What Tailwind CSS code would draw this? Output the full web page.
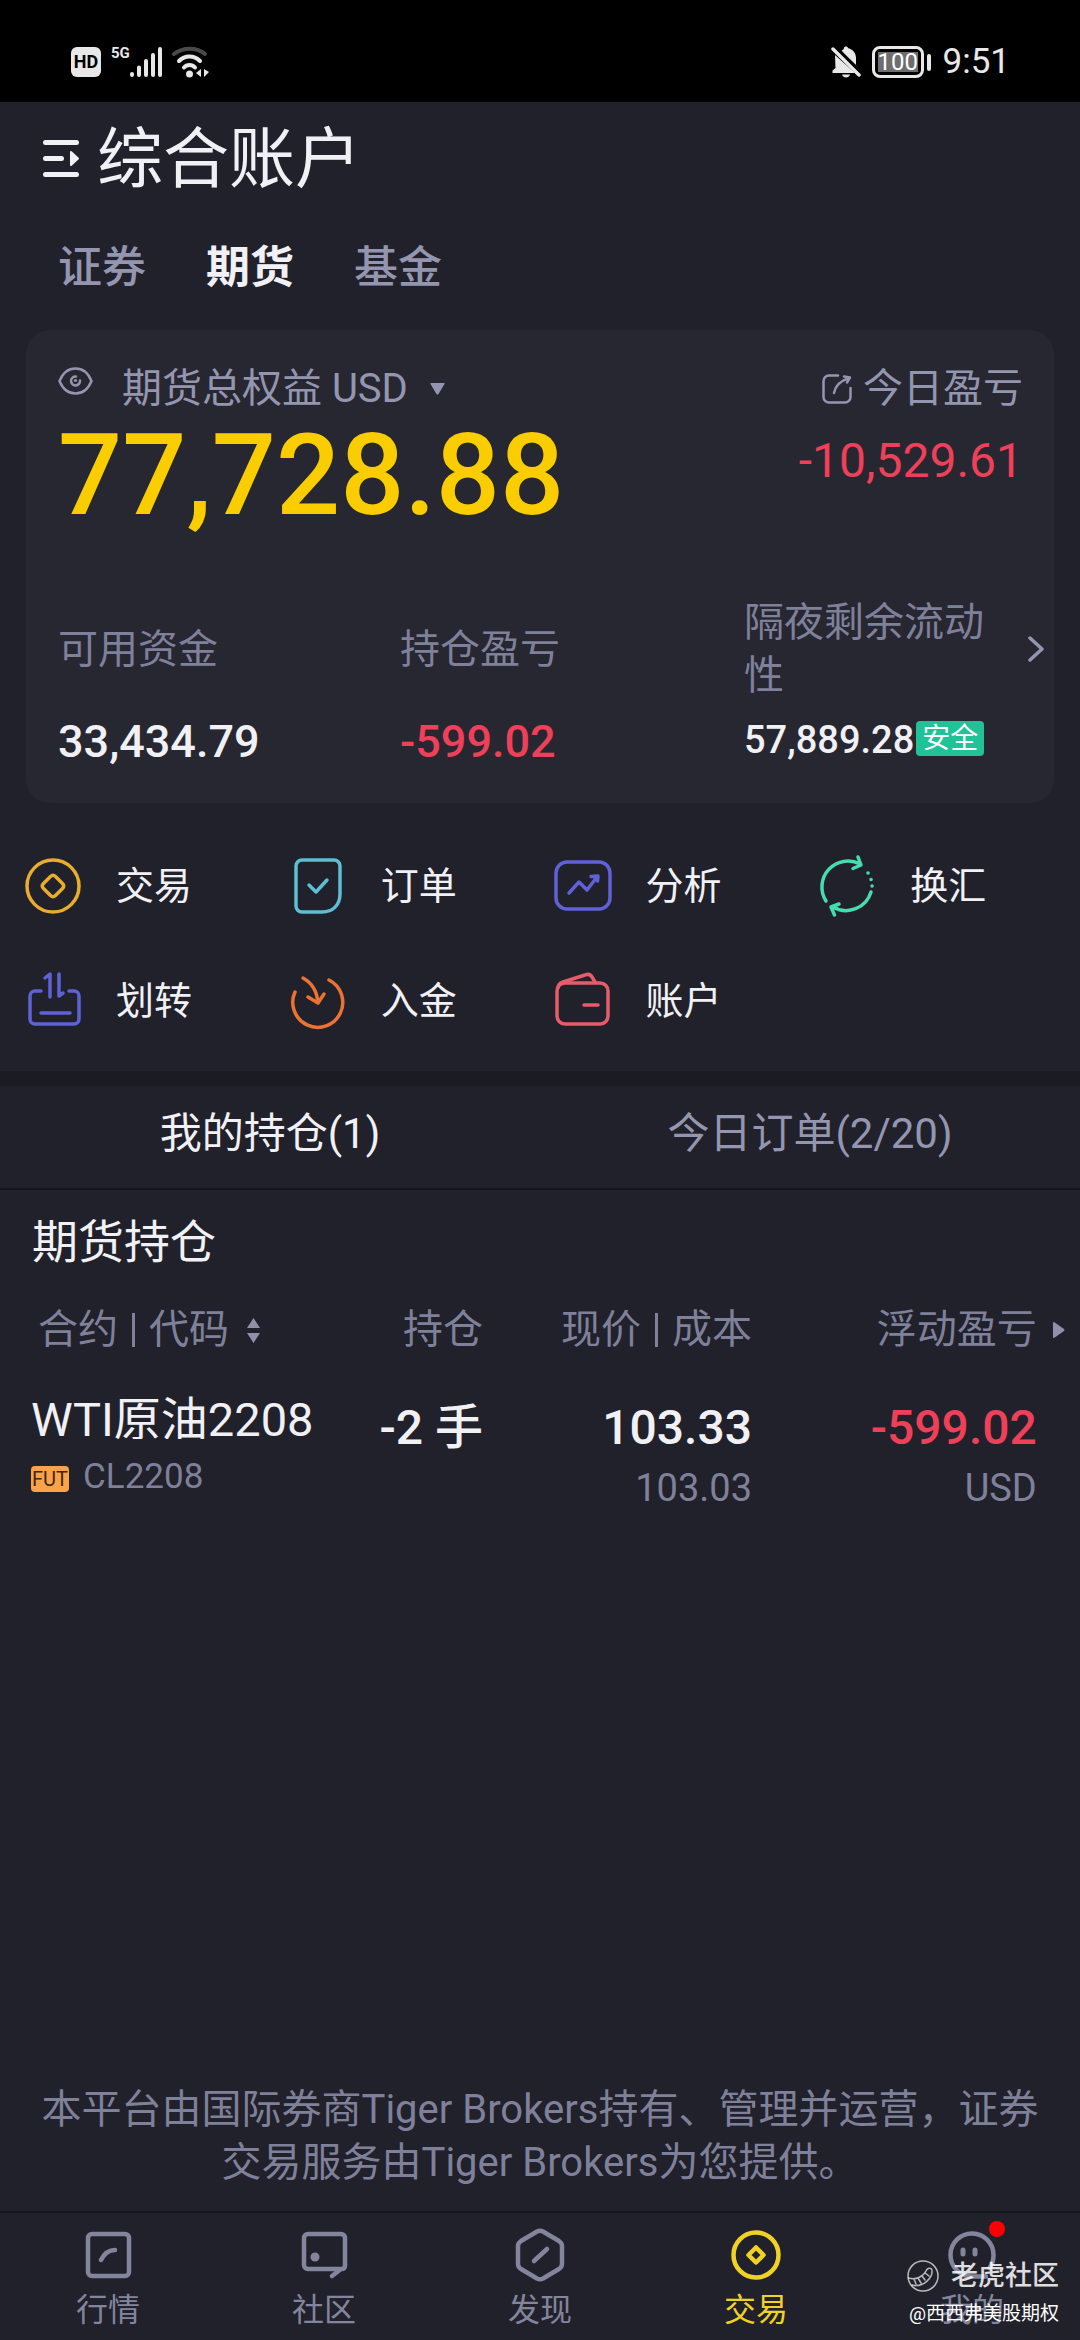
<!DOCTYPE html>
<html lang="zh-CN">
<head>
  <meta charset="UTF-8">
  <meta name="viewport" content="width=device-width, initial-scale=1.0">
  <title>综合账户</title>
  <script src="https://cdn.jsdelivr.net/npm/@tailwindcss/browser@4"></script>
</head>
<body class="min-h-screen flex flex-col bg-[#21212b] text-[#f1f1f5] font-[Roboto,'Noto_Sans_CJK_SC',sans-serif]">

  <!-- status bar -->
  <div class="h-[102px] shrink-0 bg-black flex items-center justify-between pt-[22px] pl-[71px] pr-[70px] text-[#e8e8e8]">
    <div class="flex items-center">
      <span class="w-[30px] h-[30px] rounded-md bg-[#e8e8e8] text-black text-[18px] leading-[30px] font-bold text-center">HD</span>
      <span class="ml-[10px] self-start text-[15px] leading-[14px] font-bold">5G</span>
      <svg class="w-[34px] h-8" viewBox="0 0 34 32" fill="none" stroke="currentColor" stroke-width="4" stroke-linecap="round">
        <path d="M2 28v1M9 21.500v7.500M16 15v14M23 9v20M30 3v26"/>
      </svg>
      <svg class="ml-[7px] w-10 h-8" viewBox="0 0 40 32" fill="none" stroke-linecap="round" stroke-width="4">
        <path d="M3 8C12 1 26 1 34 8" stroke="#4a4a4a"/>
        <path d="M8 15C14 9 23 9 29 15M13 21.500C16 18 21 18 24 21.500" stroke="currentColor"/>
        <circle cx="18.500" cy="28" r="3.500" fill="currentColor"/>
        <path d="M30 23v8l-5-4zM33 23v8l5-5z" fill="currentColor"/>
      </svg>
    </div>
    <div class="flex items-center">
      <svg class="w-[30px] h-8" viewBox="0 0 30 32" fill="currentColor">
        <path d="M4 9L24 27H1.500v-2.500L4.500 22zM10 5.500C11 4 13 3.500 13 2c.5-2 3.500-2 4 0 5 1.500 8 5 8 10v7z"/>
        <path d="M11 28.500h8c-1 4-7 4-8 0z"/>
        <path d="M2 3L28 29" stroke="currentColor" stroke-width="3.500" stroke-linecap="round"/>
        <path d="M6 2L30 26" stroke="#000" stroke-width="2.500"/>
      </svg>
      <span class="ml-[11px] p-[3px] border-[3px] border-[#e8e8e8] rounded-lg"><span class="block w-10 h-5 bg-[#6e6e6e] text-white text-[24px] leading-5 text-center">100</span></span>
      <span class="ml-[3px] mr-3 w-1 h-[17px] rounded-sm bg-[#e8e8e8]"></span>
      <time class="text-[35px] leading-8">9:51</time>
    </div>
  </div>

  <header class="pt-[25px]">
    <div class="flex items-center gap-[18px] pl-[43px]">
      <button class="mb-1" aria-label="切换账户">
        <svg class="block w-9 h-[37px]" viewBox="0 0 36 37" fill="none" stroke="currentColor" stroke-width="5" stroke-linecap="round">
          <path d="M2.500 2.500h31M2.500 18.500h16M2.500 34.500h31"/>
          <path d="M28 12l7 6.500-7 6.500z" fill="currentColor" stroke-width="2" stroke-linejoin="round"/>
        </svg>
      </button>
      <h1 class="text-[66px] leading-[66px]">综合账户</h1>
    </div>
    <nav class="flex gap-[60px] mt-[53px] pl-[58px] text-[44px] leading-[44px] font-medium text-[#9496b0]">
      <a href="#">证券</a>
      <a href="#" class="font-bold text-[#f1f1f5]">期货</a>
      <a href="#">基金</a>
    </nav>
  </header>

  <section class="mt-[40px] mx-[26px] h-[473px] rounded-3xl bg-[#272732] text-[40px] pl-8 pr-[10px] pt-[32px]">
    <div class="flex justify-between pr-[21px] text-[#9496b0]">
      <div>
        <div class="flex items-center leading-[53px]">
          <button class="mb-4 mr-[29px]" aria-label="隐藏金额">
            <svg class="block w-[35px] h-[28px]" viewBox="0 0 35 28" fill="none" stroke="currentColor" stroke-width="2.500" stroke-linecap="round">
              <path d="M1.500 14C5 5.500 11 1.500 17.500 1.500S30 5.500 33.500 14C30 22.500 24 26.500 17.500 26.500S5 22.500 1.500 14z"/>
              <path d="M18 9.500A4.500 4.500 0 1 0 22 13.500M17 13.500h1"/>
            </svg>
          </button>
          <button class="flex items-center gap-[22px]">期货总权益 USD
            <svg class="w-[15px] h-3" viewBox="0 0 15 12" fill="currentColor"><path d="M1 0h13q1 0 .5 1L8.500 11q-1 1-2 0L.5 1Q0 0 1 0z"/></svg>
          </button>
        </div>
        <p class="mt-px text-[113px] leading-[120px] font-medium text-[#f9cd00]">77,728.88</p>
      </div>
      <div class="flex flex-col items-end">
        <a href="#" class="flex items-center gap-[11px] leading-[53px]">
          <svg class="w-[30px] h-[30px]" viewBox="0 0 30 30" fill="none" stroke="currentColor" stroke-width="2.500" stroke-linecap="round" stroke-linejoin="round">
            <path d="M16 1.500H7A5.500 5.500 0 0 0 1.500 7v16A5.500 5.500 0 0 0 7 28.500h16a5.500 5.500 0 0 0 5.500-5.500v-9"/>
            <path d="M12 19C13 13 18 7 27 4M22 2.500l6 1-3 5"/>
          </svg>今日盈亏
        </a>
        <p class="mt-[18px] text-[48px] leading-[56px] text-[#ef405a]">-10,529.61</p>
      </div>
    </div>

    <div class="flex mt-[60px] text-[#7f8099]">
      <div class="w-[342px]">
        <p class="leading-[53px] py-[27px]">可用资金</p>
        <p class="mt-[12px] text-[45px] leading-[53px] font-medium text-[#f1f1f5]">33,434.79</p>
      </div>
      <div class="w-[344px]">
        <p class="leading-[53px] py-[27px]">持仓盈亏</p>
        <p class="mt-[12px] text-[45px] leading-[53px] font-medium text-[#ef405a]">-599.02</p>
      </div>
      <div class="w-[244px]">
        <p class="leading-[53px]">隔夜剩余流动性</p>
        <p class="mt-[12px] flex items-center whitespace-nowrap text-[38px] leading-[53px] font-medium text-[#f1f1f5]">57,889.28<span class="mb-1 ml-[2px] px-[6px] rounded bg-[#22c298] text-[28px] leading-[35px] font-normal text-white">安全</span></p>
      </div>
      <button class="ml-auto mt-[40px] self-start" aria-label="详情">
        <svg class="block w-4 h-[26px]" viewBox="0 0 16 26" fill="none" stroke="#9496b0" stroke-width="3.500" stroke-linecap="round" stroke-linejoin="round"><path d="M2 2l12 11L2 24"/></svg>
      </button>
    </div>
  </section>

  <!-- quick actions -->
  <nav class="grid grid-cols-4 gap-y-[51px] mt-[51px] pl-[21px] text-[38px] leading-[64px]">
    <a href="#" class="flex items-center gap-[31px]">
      <svg class="w-16 h-16" viewBox="0 0 64 64" fill="none" stroke="#e8ac2e" stroke-width="3.500">
        <circle cx="32" cy="32" r="26"/>
        <path d="M29.500 22.500q2.500-2.500 5 0l7 7q2.500 2.500 0 5l-7 7q-2.500 2.500-5 0l-7-7q-2.500-2.500 0-5z"/>
      </svg>交易
    </a>
    <a href="#" class="flex items-center gap-[31px]">
      <svg class="w-16 h-16" viewBox="0 0 64 64" fill="none" stroke="#5cbfd2" stroke-width="3.500" stroke-linecap="round" stroke-linejoin="round">
        <path d="M16 6h32a6 6 0 0 1 6 6v28c0 11-7 18-18 18H16a6 6 0 0 1-6-6V12a6 6 0 0 1 6-6z"/>
        <path d="M23 31l7 7 11-12"/>
      </svg>订单
    </a>
    <a href="#" class="flex items-center gap-[31px]">
      <svg class="w-16 h-16" viewBox="0 0 64 64" fill="none" stroke="#5f61d6" stroke-width="3.500" stroke-linecap="round" stroke-linejoin="round">
        <rect x="5" y="8" width="54" height="47" rx="11"/>
        <path d="M18 39l10-11 8 8 10-13M40 22.500l7-.5-.5 5"/>
      </svg>分析
    </a>
    <a href="#" class="flex items-center gap-[31px]">
      <svg class="w-16 h-16" viewBox="0 0 64 64" fill="none" stroke="#45dcb0" stroke-width="3.500" stroke-linecap="round" stroke-linejoin="round">
        <path d="M11 47A26 26 0 0 1 45 10M43 3l3 8-8 3.500M56 38A26 26 0 0 1 18 53M24 50l-8 3 3.500 8"/>
        <path d="M53 19h.1M56 25.500h.1M57 32h.1"/>
      </svg>换汇
    </a>
    <a href="#" class="flex items-center gap-[31px]">
      <svg class="w-16 h-16" viewBox="0 0 64 64" fill="none" stroke="#5f61d6" stroke-width="3.500" stroke-linecap="round" stroke-linejoin="round">
        <path d="M20 22h-6a5 5 0 0 0-5 5v23a5 5 0 0 0 5 5h39a5 5 0 0 0 5-5V27a5 5 0 0 0-5-5h-5"/>
        <path d="M20 44h29M24 9l5-4v23M38 5v22l4-3"/>
      </svg>划转
    </a>
    <a href="#" class="flex items-center gap-[31px]">
      <svg class="w-16 h-16" viewBox="0 0 64 64" fill="none" stroke="#ec7233" stroke-width="3.500" stroke-linecap="round" stroke-linejoin="round">
        <path d="M9 23A25 25 0 1 0 43 11"/>
        <path d="M17 9C26 14 31 21 32 34M22 28l10 6 6-9"/>
      </svg>入金
    </a>
    <a href="#" class="flex items-center gap-[31px]">
      <svg class="w-16 h-16" viewBox="0 0 64 64" fill="none" stroke="#e65c69" stroke-width="3.500" stroke-linecap="round" stroke-linejoin="round">
        <rect x="6" y="14" width="51" height="41" rx="8"/>
        <path d="M33 36h14M7 19c0-4 2-5 5-6l22-7q5-2 7 2l3 5"/>
      </svg>账户
    </a>
  </nav>

  <div class="flex mt-[38px] border-t-[15px] border-t-[#1b1b24] border-b-2 border-b-[#14141c] text-[42px] leading-[96px]">
    <button class="flex-1 pb-[6px]">我的持仓(1)</button>
    <button class="flex-1 pb-[6px] text-[#9496b0]">今日订单(2/20)</button>
  </div>

  <main>
    <h2 class="pl-8 mt-[20px] text-[46px] leading-[64px]">期货持仓</h2>
    <table class="w-full mt-[28px] table-fixed text-right">
      <colgroup>
        <col class="w-[30%]">
        <col class="w-[15%]">
        <col class="w-[25%]">
        <col class="w-[26%]">
        <col class="w-[4%]">
      </colgroup>
      <thead class="text-[40px] leading-[56px] text-[#7f8099]">
        <tr>
          <th class="p-0 pl-[38px] font-normal">
            <button class="flex items-center">合约<span class="mx-[14px] w-[3px] h-[34px] bg-[#7f8099]"></span>代码
              <svg class="ml-[18px] w-[13px] h-[25px]" viewBox="0 0 13 25" fill="#8f91ab"><path d="M6.500 0L13 10H0zM6.500 25L13 15H0z"/></svg>
            </button>
          </th>
          <th class="p-0 pr-[3px] font-normal">持仓</th>
          <th class="p-0 pr-1 font-normal"><span class="flex items-center justify-end">现价<span class="mx-[14px] w-[3px] h-[34px] bg-[#7f8099]"></span>成本</span></th>
          <th class="p-0 font-normal">浮动盈亏</th>
          <th class="p-0"><svg class="ml-4 w-3 h-4" viewBox="0 0 12 16" fill="#8f91ab"><path d="M0 1q0-1 1-1l10 7q1 1 0 2L1 16q-1 0-1-1z"/></svg></th>
        </tr>
      </thead>
      <tbody class="align-top">
        <tr>
          <td class="p-0 pt-[34px] pl-[31px] text-left">
            <p class="text-[47px] leading-[56px] h-[47px] overflow-hidden whitespace-nowrap">WTI原油2208</p>
            <p class="mt-[14px] flex items-center gap-[14px] text-[35px] leading-[48px] text-[#7f8099]"><span class="mt-1 w-[38px] h-[26px] rounded-sm bg-[#f9a24a] text-center text-[20px] leading-[27px] text-[#40250c]">FUT</span>CL2208</p>
          </td>
          <td class="p-0 pr-[3px] pt-[42px] text-[48px] leading-[56px] font-medium whitespace-nowrap">-2 手</td>
          <td class="p-0 pt-[42px] pr-1">
            <p class="text-[48px] leading-[56px] font-medium">103.33</p>
            <p class="mt-[8px] text-[38px] leading-[48px] text-[#7f8099]">103.03</p>
          </td>
          <td class="p-0 pt-[42px]">
            <p class="text-[48px] leading-[56px] font-medium text-[#ef405a]">-599.02</p>
            <p class="mt-[8px] text-[38px] leading-[48px] text-[#7f8099]">USD</p>
          </td>
          <td></td>
        </tr>
      </tbody>
    </table>
  </main>

  <footer class="mt-auto">
    <p class="px-[38px] pb-[22px] text-center text-[40px] leading-[53px] text-[#7f8099]">本平台由国际券商Tiger Brokers持有、管理并运营，证券交易服务由Tiger Brokers为您提供。</p>
    <nav class="relative flex border-t-2 border-[#16161e] pt-[14px] pb-[6px] text-[32px] leading-[48px] text-center text-[#83859d]">
      <a href="#" class="flex-1 flex flex-col items-center gap-[3px]">
        <svg class="w-14 h-14" viewBox="0 0 56 56" fill="none" stroke="currentColor" stroke-width="4.500" stroke-linecap="round">
          <rect x="8" y="7" width="41" height="42" rx="4"/><path d="M21 33C24 27 28 23 35 23"/>
        </svg>行情
      </a>
      <a href="#" class="flex-1 flex flex-col items-center gap-[3px]">
        <svg class="w-14 h-14" viewBox="0 0 56 56" fill="none" stroke="currentColor" stroke-width="4.500" stroke-linecap="round" stroke-linejoin="round">
          <path d="M12 7h33a4 4 0 0 1 4 4v28q0 3-4 3l-9 7M44 42H12a4 4 0 0 1-4-4V11a4 4 0 0 1 4-4"/><circle cx="19" cy="30" r="4.500" fill="currentColor" stroke="none"/>
        </svg>社区
      </a>
      <a href="#" class="flex-1 flex flex-col items-center gap-[3px]">
        <svg class="w-14 h-14" viewBox="0 0 56 56" fill="none" stroke="currentColor" stroke-width="4.500" stroke-linecap="round" stroke-linejoin="round">
          <path d="M25 4.500q3-1.500 6 0l16 9.500q3 2 3 5v18q0 3-3 5l-16 9.500q-3 1.500-6 0L9 42q-3-2-3-5V19q0-3 3-5z"/><path d="M22 34l13-12"/>
        </svg>发现
      </a>
      <a href="#" class="flex-1 flex flex-col items-center gap-[3px] text-[#f0d128]">
        <svg class="w-14 h-14" viewBox="0 0 56 56" fill="none" stroke="currentColor" stroke-width="4.500" stroke-linejoin="round">
          <circle cx="28" cy="28" r="22.500"/><path d="M28 20.500l7.500 7.500-7.500 7.500-7.500-7.500z"/>
        </svg>交易
      </a>
      <a href="#" class="relative flex-1 flex flex-col items-center gap-[3px]">
        <svg class="w-14 h-14" viewBox="0 0 56 56" fill="none" stroke="currentColor" stroke-width="4.500" stroke-linecap="round">
          <path d="M42 49.500H27A21.500 21.500 0 1 1 49.500 28q0 8-4 13"/><path d="M19 23v4M31 23v4" stroke-width="5"/>
        </svg>我的
        <span class="absolute -top-[6px] left-1/2 ml-[17px] w-4 h-4 rounded-full bg-[#ff0000]"></span>
      </a>

      <!-- community watermark -->
      <div class="absolute right-[21px] bottom-[10px] flex flex-col items-end text-white">
        <div class="flex items-center gap-3 text-[27px] leading-[36px] font-medium text-white/85">
          <svg class="w-8 h-8" viewBox="0 0 32 32" fill="none" stroke="currentColor" stroke-opacity=".8" stroke-width="1.500" stroke-linecap="round">
            <circle cx="16" cy="16" r="15"/>
            <path d="M1.500 18C9 20 16 17 19 11c1-3 5-4 6-1 1 8-9 18-20 15M7 19l2 5M11 18l3 5M15 16l3 4M18 13l4 3"/>
          </svg>老虎社区
        </div>
        <p class="mt-[4px] text-[19px] leading-[32px]">@西西弗美股期权</p>
      </div>
    </nav>
  </footer>
</body>
</html>
